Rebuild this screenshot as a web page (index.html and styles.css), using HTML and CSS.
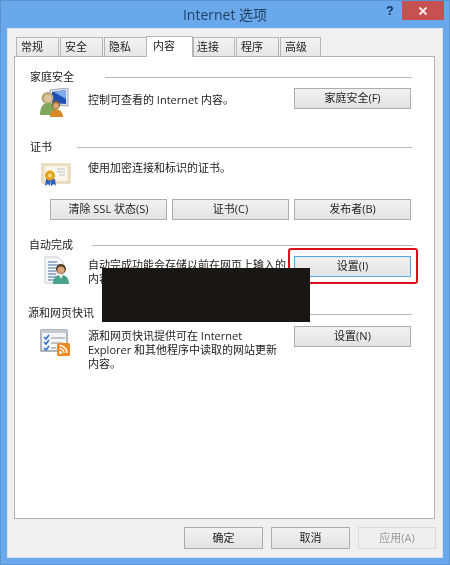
FILE: index.html
```html
<!DOCTYPE html>
<html lang="zh-CN">
<head>
<meta charset="utf-8">
<title>Internet 选项</title>
<link rel="stylesheet" href="styles.css">
</head>
<body>
<div class="window">
  <header class="titlebar">
    <span></span>
    <h1 class="title">Internet 选项</h1>
    <div class="controls">
      <span class="help">?</span>
      <span class="close"><svg width="10" height="10" viewBox="0 0 10 10"><path d="M1.500 1.500l7 7M8.500 1.500l-7 7" stroke="#fbecec" stroke-width="1.800" fill="none"/></svg></span>
    </div>
  </header>
  <div class="client">
    <nav class="tabs">
      <span class="tab">常规</span>
      <span class="tab">安全</span>
      <span class="tab">隐私</span>
      <span class="tab active">内容</span>
      <span class="tab after-active">连接</span>
      <span class="tab">程序</span>
      <span class="tab last">高级</span>
    </nav>
    <main class="panel">
      <section class="group g1">
        <div class="legend"><span>家庭安全</span><i></i></div>
        <div class="row">
          <svg class="icon" width="30" height="30" viewBox="0 0 30 30">
            <path d="M10 2l18-2v18l-18-2z" fill="#dfe6ee" stroke="#9aa6b4" stroke-width="1"/>
            <path d="M12 4l14-2v14l-14-1z" fill="#1f4fb5"/>
            <path d="M14 4l12-2v9z" fill="#7fabe8"/>
            <circle cx="7.500" cy="10" r="6" fill="#b9a677"/>
            <circle cx="8" cy="10.500" r="4" fill="#dcc49c"/>
            <path d="M0 27c0-8 3-12 8-12s10 4 10 12z" fill="#7fa65c"/>
            <circle cx="16" cy="17" r="4.200" fill="#86683a"/>
            <circle cx="16" cy="17.800" r="2.900" fill="#d9a676"/>
            <path d="M10 29c0-5 2-7.500 6-7.500s7 2.500 7 7.500z" fill="#d68a26"/>
          </svg>
          <p class="desc d1">控制可查看的 Internet 内容。</p>
          <button class="btn wide">家庭安全(F)</button>
        </div>
      </section>
      <section class="group g2">
        <div class="legend"><span>证书</span><i></i></div>
        <div class="row">
          <svg class="icon ic2" width="30" height="24" viewBox="0 0 30 24">
            <rect x="1" y="1" width="28" height="19" fill="#f3e3c6" stroke="#dcc9a6"/>
            <rect x="4" y="3.500" width="22" height="14" fill="#fbf7ef"/>
            <path d="M16 6h8M16 9h8M18 12h6" stroke="#cfd3d6" stroke-width="1.500"/>
            <path d="M5 16l-1 7 3-2 2 2 1-7zM10 16l0 7 3-2 2 2-1-7z" fill="#2a62c4"/>
            <circle cx="9" cy="12.500" r="5" fill="#e0a41c"/>
            <circle cx="9" cy="12.500" r="2" fill="#f6d976"/>
          </svg>
          <p class="desc">使用加密连接和标识的证书。</p>
        </div>
        <div class="btnrow">
          <button class="btn wide">清除 SSL 状态(S)</button>
          <button class="btn wide">证书(C)</button>
          <button class="btn wide">发布者(B)</button>
        </div>
      </section>
      <section class="group g3">
        <div class="legend"><span>自动完成</span><i></i></div>
        <div class="row">
          <svg class="icon ic3" width="26" height="29" viewBox="0 0 26 29">
            <path d="M1 1h13l5 5v21H1z" fill="#f6f7f9" stroke="#c9ccd1"/>
            <path d="M4 6h9M4 9h12M4 12h12M4 15h8M4 18h8M4 21h8M4 24h8" stroke="#7e9cc6" stroke-width="1.400"/>
            <circle cx="17" cy="13" r="5" fill="#5a3d25"/>
            <circle cx="17" cy="14" r="3.600" fill="#d9a47c"/>
            <path d="M9 28c0-6 3-9 8-9s8 3 8 9z" fill="#4aa28c"/>
            <path d="M15 19l2 4 2-4z" fill="#eef6f4"/>
          </svg>
          <p class="desc d3">自动完成功能会存储以前在网页上输入的<br>内容，并建议匹配的内容。</p>
          <div class="marked">
            <button class="btn wide focus">设置(I)</button>
            <span class="redbox"></span>
          </div>
        </div>
      </section>
      <section class="group g4">
        <div class="legend"><span>源和网页快讯</span><i></i></div>
        <div class="row">
          <svg class="icon ic4" width="30" height="27" viewBox="0 0 30 27">
            <rect x="1" y="1" width="26" height="21" fill="#f4f6f9" stroke="#7f8790" stroke-width="1.200"/>
            <path d="M1 1h26v3H1z" fill="#c5cad0"/>
            <path d="M4 8l2 2 3-4M4 13l2 2 3-4M4 19l2 2 3-4" stroke="#2a6fd0" stroke-width="1.500" fill="none"/>
            <path d="M11 9h14M11 14h12M11 19h5" stroke="#8b929a" stroke-width="1.200"/>
            <rect x="17" y="14" width="13" height="13" rx="1.500" fill="#ee8a24"/>
            <circle cx="20.500" cy="23.500" r="1.500" fill="#fff"/>
            <path d="M19.500 19.500a4.500 4.500 0 0 1 4.500 4.500M19.500 16.500a7.500 7.500 0 0 1 7.500 7.500" stroke="#fff" stroke-width="1.500" fill="none"/>
          </svg>
          <p class="desc d4">源和网页快讯提供可在 Internet<br>Explorer 和其他程序中读取的网站更新<br>内容。</p>
          <button class="btn wide">设置(N)</button>
        </div>
      </section>
      <div class="redact"></div>
    </main>
    <footer class="footer">
      <button class="btn small">确定</button>
      <button class="btn small">取消</button>
      <button class="btn small disabled">应用(A)</button>
    </footer>
  </div>
</div>
</body>
</html>
```

FILE: styles.css
```css
* { box-sizing: border-box; }
html, body { margin: 0; padding: 0; }
body {
  width: 450px;
  height: 565px;
  overflow: hidden;
  font-family: "Open Sans", "Noto Sans CJK SC", sans-serif;
  font-size: 11px;
  color: #222;
}
.window {
  width: 450px;
  height: 565px;
  background: #6aa8ec;
  border: 1px solid #5b93d2;
  padding: 0 6px 6px;
  display: flex;
  flex-direction: column;
  filter: blur(0.35px);
}
.titlebar {
  height: 27px;
  display: grid;
  grid-template-columns: 1fr auto 1fr;
  align-items: start;
}
.title {
  margin: 0;
  padding-top: 4px;
  font-size: 14px;
  line-height: 20px;
  font-weight: 400;
  color: #1f3f5f;
}
.controls {
  justify-self: end;
  display: flex;
  align-items: flex-start;
  margin-right: -1px;
}
.help {
  width: 24px;
  font: 700 12px/20px "Liberation Sans", sans-serif;
  color: #12294a;
  text-align: center;
}
.close {
  width: 42px;
  height: 19px;
  background: #c75050;
  display: flex;
  align-items: center;
  justify-content: center;
}
.client {
  flex: 1;
  background: #f0f0f0;
  border: 1px solid #d5e3f3;
  padding: 8px 7px 0 6px;
  display: flex;
  flex-direction: column;
}
.tabs {
  height: 19px;
  display: flex;
  align-items: flex-end;
  padding-left: 2px;
  position: relative;
  z-index: 1;
}
.tab {
  width: 43px;
  height: 19px;
  margin-right: 1px;
  background: linear-gradient(#f3f3f3, #e6e6e6);
  border: 1px solid #b6b6b6;
  border-bottom: 0;
  line-height: 18px;
  padding-left: 4px;
}
.tab.active {
  width: 47px;
  height: 21px;
  margin: 0 0 -1px -2px;
  background: #fff;
  line-height: 18px;
  padding-left: 6px;
}
.tab.after-active {
  width: 42px;
  padding-left: 3px;
}
.tab.last { width: 41px; }
.panel {
  position: relative;
  flex: none;
  height: 463px;
  background: #fff;
  border: 1px solid #b4b4b4;
  padding: 13px 23px 0 15px;
}
.group { display: block; }
.g1 { height: 70px; }
.g2 { height: 98px; }
.g3 { height: 68px; }
.legend {
  height: 14px;
  display: flex;
  align-items: center;
  gap: 10px;
  line-height: 14px;
  margin-right: -1px;
}
.legend span { white-space: nowrap; }
.legend i {
  flex: 1;
  height: 1px;
  background: #b9b9b9;
}
.g1 .legend i { margin-left: 21px; }
.g2 .legend i { margin-left: 15px; }
.g3 .legend i { margin-left: 9px; }
.g4 .legend i { margin-top: 3px; }
.g3 .legend { margin-left: -1px; margin-right: -2px; }
.g4 .legend { margin-left: -2px; }
.row {
  display: flex;
  align-items: flex-start;
  margin-top: 4px;
}
.g2 .row { margin-top: 7px; height: 26px; }
.g4 .row { margin-top: 6px; }
.icon {
  flex: none;
  box-sizing: content-box;
  width: 30px;
  padding-left: 10px;
  padding-right: 18px;
}
.ic2 { margin-top: 2px; padding-left: 11px; padding-right: 17px; }
.ic3 { width: 26px; padding-left: 14px; padding-right: 18px; }
.ic4 { margin-top: 3px; padding-left: 10px; padding-right: 18px; }
.desc {
  flex: 1;
  margin: 0;
  line-height: 14px;
  white-space: nowrap;
}
.d1 { padding-top: 5px; }
.d3 { padding-top: 2px; }
.d4 { padding-top: 3px; }
.btn {
  display: block;
  height: 21px;
  padding: 0 0 3px;
  font-family: inherit;
  font-size: 11px;
  color: #222;
  background: linear-gradient(#f2f2f2, #e3e3e3);
  border: 1px solid #adadad;
}
.wide { width: 117px; flex: none; }
.small { width: 79px; height: 22px; padding-bottom: 2px; }
.focus { border: 1px solid #5fa8dd; box-shadow: inset 0 0 0 1px #dceaf5; }
.disabled { width: 78px; color: #9a9a9a; border-color: #d9d9d9; background: #efefef; }
.btnrow {
  display: flex;
  gap: 5px;
  margin-top: 12px;
  margin-left: 20px;
}
.marked { position: relative; flex: none; }
.redbox {
  position: absolute;
  left: -6px;
  top: -8px;
  width: 130px;
  height: 36px;
  border: 2.500px solid #dc1018;
  border-radius: 3px;
}
.redact {
  position: absolute;
  left: 87px;
  top: 211px;
  width: 208px;
  height: 54px;
  background: #1a1616;
}
.footer {
  flex: 1;
  display: flex;
  justify-content: flex-end;
  gap: 8px;
  padding-top: 8px;
  margin-right: -1px;
}
```
